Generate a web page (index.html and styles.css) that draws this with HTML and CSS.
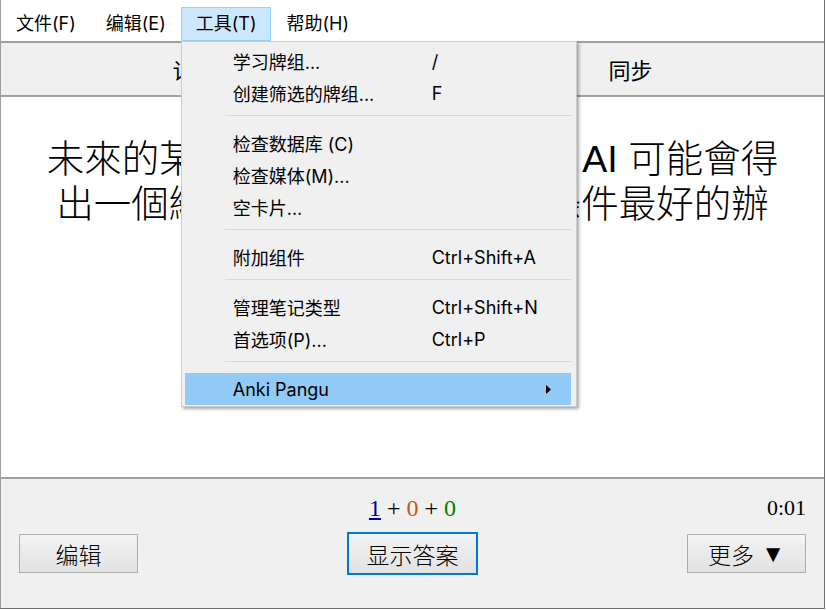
FILE: index.html
```html
<!DOCTYPE html>
<html lang="zh">
<head>
<meta charset="utf-8">
<title>Anki</title>
<link rel="stylesheet" href="styles.css">
</head>
<body>
<div class="window">
  <div class="menubar">
    <span class="mi">文件(F)</span>
    <span class="mi">编辑(E)</span>
    <span class="mi open">工具(T)
      <div class="menu">
        <div class="item"><span class="label">学习牌组...</span><span class="key">/</span></div>
        <div class="item"><span class="label">创建筛选的牌组...</span><span class="key">F</span></div>
        <div class="sep"></div>
        <div class="item"><span class="label">检查数据库 (C)</span><span class="key"></span></div>
        <div class="item"><span class="label">检查媒体(M)...</span><span class="key"></span></div>
        <div class="item"><span class="label">空卡片...</span><span class="key"></span></div>
        <div class="sep"></div>
        <div class="item"><span class="label">附加组件</span><span class="key">Ctrl+Shift+A</span></div>
        <div class="sep"></div>
        <div class="item"><span class="label">管理笔记类型</span><span class="key">Ctrl+Shift+N</span></div>
        <div class="item"><span class="label">首选项(P)...</span><span class="key">Ctrl+P</span></div>
        <div class="sep"></div>
        <div class="item hot"><span class="label">Anki Pangu</span><span class="key"></span>
          <svg class="arrow" width="5" height="9" viewBox="0 0 5 9"><path d="M0 0L5 4.5L0 9Z" fill="#000"/></svg>
        </div>
      </div>
    </span>
    <span class="mi">帮助(H)</span>
  </div>
  <div class="toolbar">
    <span class="tb">记忆</span>
    <span class="tb">添加</span>
    <span class="tb">浏览</span>
    <span class="tb">统计</span>
    <span class="tb">同步</span>
  </div>
  <div class="card">
    <p class="qa">未來的某一天，人類發明的超級 AI 可能會得出一個絕對理性且綜合了所有條件最好的辦法。</p>
  </div>
  <div class="bottombar">
    <div class="row info">
      <span></span>
      <span class="counts"><span class="new">1</span> + <span class="lrn">0</span> + <span class="rev">0</span></span>
      <span class="time">0:01</span>
    </div>
    <div class="row buttons">
      <button class="btn side">编辑</button>
      <button class="btn primary">显示答案</button>
      <button class="btn side more">更多 <span class="tri">▼</span></button>
    </div>
  </div>
</div>
</body>
</html>
```

FILE: styles.css
```css
* { box-sizing: border-box; }
html, body { margin: 0; padding: 0; }
body {
  width: 826px;
  height: 610px;
  overflow: hidden;
  background: #fff;
  font-family: Inter, "Noto Sans CJK SC", sans-serif;
  color: #000;
}
.window {
  width: 825px;
  height: 609px;
  border-left: 1px solid #a0a0a0;
  border-right: 1px solid #707070;
  border-bottom: 1px solid #707070;
  display: flex;
  flex-direction: column;
}
.menubar {
  height: 41px;
  flex: none;
  display: flex;
  align-items: flex-end;
  background: #fff;
}
.mi {
  position: relative;
  height: 34px;
  line-height: 32px;
  padding: 0 14px;
  border: 1px solid transparent;
  font-size: 18px;
  white-space: nowrap;
}
.mi.open {
  background: #cce8ff;
  border-color: #99d1ff;
}
.menu {
  position: absolute;
  top: calc(100% + 1px);
  left: -1px;
  width: 396px;
  background: #f0f0f0;
  border: 1px solid #cccccc;
  box-shadow: 2px 2px 3px rgba(0, 0, 0, 0.35);
  padding: 3px 5px 1px 3px;
  line-height: normal;
  z-index: 10;
}
.item {
  height: 32px;
  display: flex;
  align-items: center;
  padding-left: 48px;
}
.item .label { width: 199px; }
.item .key { flex: 1; }
.item.hot { background: #91c9f7; }
.arrow { margin-right: 20px; }
.sep {
  height: 18px;
  padding: 6px 0 0 40px;
}
.sep::before {
  content: "";
  display: block;
  height: 1px;
  background: #d7d7d7;
}
.toolbar {
  height: 56px;
  flex: none;
  border-top: 2px solid #a0a0a0;
  border-bottom: 2px solid #a0a0a0;
  background: #f0f0f0;
  display: flex;
  justify-content: center;
  align-items: center;
  gap: 65px;
  font-family: "Noto Sans CJK SC", sans-serif;
  font-size: 22px;
}
.card {
  flex: 1;
  background: #fff;
  padding-top: 40px;
}
.qa {
  width: 742px;
  margin: 0 auto;
  text-align: center;
  font-family: "Liberation Sans", "Noto Sans CJK TC", sans-serif;
  font-weight: 300;
  font-size: 37.5px;
  line-height: 45px;
}
.bottombar {
  height: 131px;
  flex: none;
  border-top: 2px solid #a0a0a0;
  background: #f0f0f0;
  padding: 0 18px;
}
.row {
  display: grid;
  grid-template-columns: 1fr auto 1fr;
  align-items: center;
}
.info {
  margin-top: 12px;
  height: 34px;
  font-family: "Liberation Serif", serif;
}
.counts { font-size: 24px; }
.new { color: #000090; text-decoration: underline; }
.lrn { color: #c35617; }
.rev { color: #008000; }
.time { justify-self: end; font-size: 22px; }
.buttons {
  margin-top: 7px;
  height: 43px;
}
.btn {
  margin: 0;
  padding: 0;
  height: 39px;
  border: 1px solid #adadad;
  border-radius: 0;
  background: linear-gradient(#f3f3f3, #e2e2e2);
  font-family: "Noto Sans CJK SC", sans-serif;
  font-weight: 300;
  font-size: 23px;
  color: #000;
  display: flex;
  align-items: center;
  justify-content: center;
  white-space: pre;
}
.tri {
  font-family: "DejaVu Sans", sans-serif;
  font-size: 24px;
  margin-left: 2px;
}
.side { width: 119px; }
.more { justify-self: end; }
.primary {
  width: 131px;
  height: 43px;
  border: 2px solid #0078d7;
}
```
